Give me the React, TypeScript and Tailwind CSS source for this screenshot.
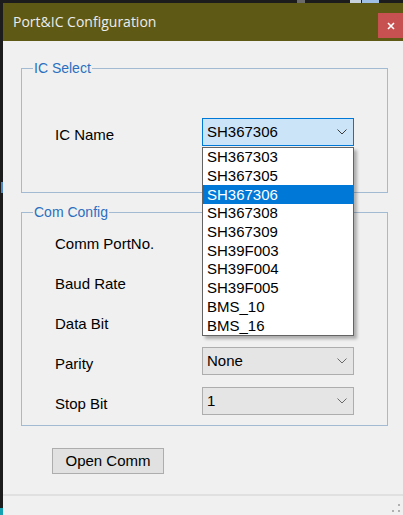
import React from 'react';

const icNames = [
  'SH367303',
  'SH367305',
  'SH367306',
  'SH367308',
  'SH367309',
  'SH39F003',
  'SH39F004',
  'SH39F005',
  'BMS_10',
  'BMS_16',
];

function Chevron({ dark }: { dark?: boolean }) {
  return (
    <svg width="10" height="6" viewBox="0 0 10 6" className="shrink-0">
      <path d="M0.5 0.5 L5 5 L9.5 0.5" fill="none" stroke={dark ? '#3c3c3c' : '#6a6a6a'} strokeWidth="1" />
    </svg>
  );
}

// the combos under the open list show nothing, so they carry no value
function Combo({ value }: { value?: string }) {
  return (
    <div className="flex h-[28px] w-[152px] items-center justify-between border border-[#adadad] bg-[#e5e5e5] pl-[4px] pr-[6px] text-[15px] text-black">
      <span className="leading-[18px]">{value}</span>
      <Chevron />
    </div>
  );
}

function Row({ label, children }: { label: string; children: React.ReactNode }) {
  return (
    <div className="flex h-[28px] items-center">
      <span className="w-[147px] pt-[5px] text-[15px] leading-[18px] text-black">{label}</span>
      {children}
    </div>
  );
}

function IcCombo() {
  return (
    <div className="relative">
      <div className="flex h-[28px] w-[152px] items-center justify-between border border-[#0078d7] bg-[#cce4f7] pl-[4px] pr-[6px] text-[15px] text-black">
        <span className="leading-[18px]">SH367306</span>
        <Chevron dark />
      </div>
      <ul className="absolute left-0 top-full z-10 mt-[1px] w-[152px] border border-[#646464] bg-white shadow-[3px_3px_3px_rgba(0,0,0,0.28)]">
        {icNames.map((n) => (
          <li
            key={n}
            className={
              n === 'SH367306'
                ? 'flex h-[18.7px] items-center bg-[#0078d7] pl-[4px] text-[15px] leading-[18px] text-white'
                : 'flex h-[18.7px] items-center pl-[4px] text-[15px] leading-[18px] text-black'
            }
          >
            {n}
          </li>
        ))}
      </ul>
    </div>
  );
}

export default function App() {
  return (
    <div className="flex h-[515px] w-[403px] flex-col overflow-hidden bg-[#1c1c1c] font-['Liberation_Sans',Arial,sans-serif]">
      {/* desktop strip above the window */}
      <div className="flex h-[3px] shrink-0">
        <div className="w-[297px]" />
        <div className="w-[8px] bg-[#6b6b6b]" />
        <div className="w-[45px]" />
        <div className="w-[11px] bg-[#c9d3de]" />
        <div className="w-[1px]" />
        <div className="w-[17px] bg-[#9fbfe4]" />
      </div>

      <div className="flex flex-1">
        <div className="flex w-[3px] shrink-0 flex-col">
          <div className="h-[179px]" />
          <div className="ml-[1px] h-[11px] w-[2px] bg-[#4f86c0]" />
          <div className="flex-1" />
          <div className="h-[7px] bg-[#17a2b4]" />
        </div>

        {/* window */}
        <div className="flex flex-1 flex-col bg-[#f0f0f0]">
          <div className="flex h-[38px] shrink-0 items-start justify-between bg-[#5e5914]">
            <span className="pl-[10px] font-['Open_Sans',sans-serif] text-[14px] leading-[38px] text-[#ececec]">
              Port&amp;IC Configuration
            </span>
            <div className="mt-[10px] flex h-[25px] w-[25px] items-center justify-center bg-[#c75050]">
              <svg width="8" height="8" viewBox="0 0 8 8">
                <path d="M1 1 L7 7 M7 1 L1 7" stroke="#ffffff" strokeWidth="1.6" />
              </svg>
            </div>
          </div>

          <fieldset className="ml-[18px] mt-[19px] w-[367px] border border-[#a3bad3] pb-[46px] pt-[42px]">
            <legend className="ml-[11px] px-[1px] text-[14px] leading-[16px] text-[#2a6fc0]">IC Select</legend>
            <div className="pl-[33px]">
              <Row label="IC Name">
                <IcCombo />
              </Row>
            </div>
          </fieldset>

          <fieldset className="ml-[18px] mt-[11px] w-[367px] border border-[#a3bad3] pb-[10px] pt-[7px]">
            <legend className="ml-[11px] px-[1px] text-[14px] leading-[16px] text-[#2a6fc0]">Com Config</legend>
            <div className="flex flex-col gap-[12px] pl-[33px]">
              <Row label="Comm PortNo.">
                <Combo />
              </Row>
              <Row label="Baud Rate">
                <Combo />
              </Row>
              <Row label="Data Bit">
                <Combo />
              </Row>
              <Row label="Parity">
                <Combo value="None" />
              </Row>
              <Row label="Stop Bit">
                <Combo value="1" />
              </Row>
            </div>
          </fieldset>

          <div className="ml-[49px] mt-[22px]">
            <button
              type="button"
              className="h-[26px] w-[112px] border border-[#adadad] bg-[#e1e1e1] text-[15px] leading-[18px] text-black"
            >
              Open Comm
            </button>
          </div>

          <div className="mt-[20px] flex flex-1 items-end justify-end border-t-2 border-[#e0e0e0] pb-[2px] pr-[2px]">
            <svg width="10" height="10" viewBox="0 0 10 10">
              <rect x="7" y="1" width="2" height="2" fill="#b0b0b0" />
              <rect x="1" y="7" width="2" height="2" fill="#b0b0b0" />
              <rect x="7" y="7" width="2" height="2" fill="#b0b0b0" />
            </svg>
          </div>
        </div>
      </div>
    </div>
  );
}
